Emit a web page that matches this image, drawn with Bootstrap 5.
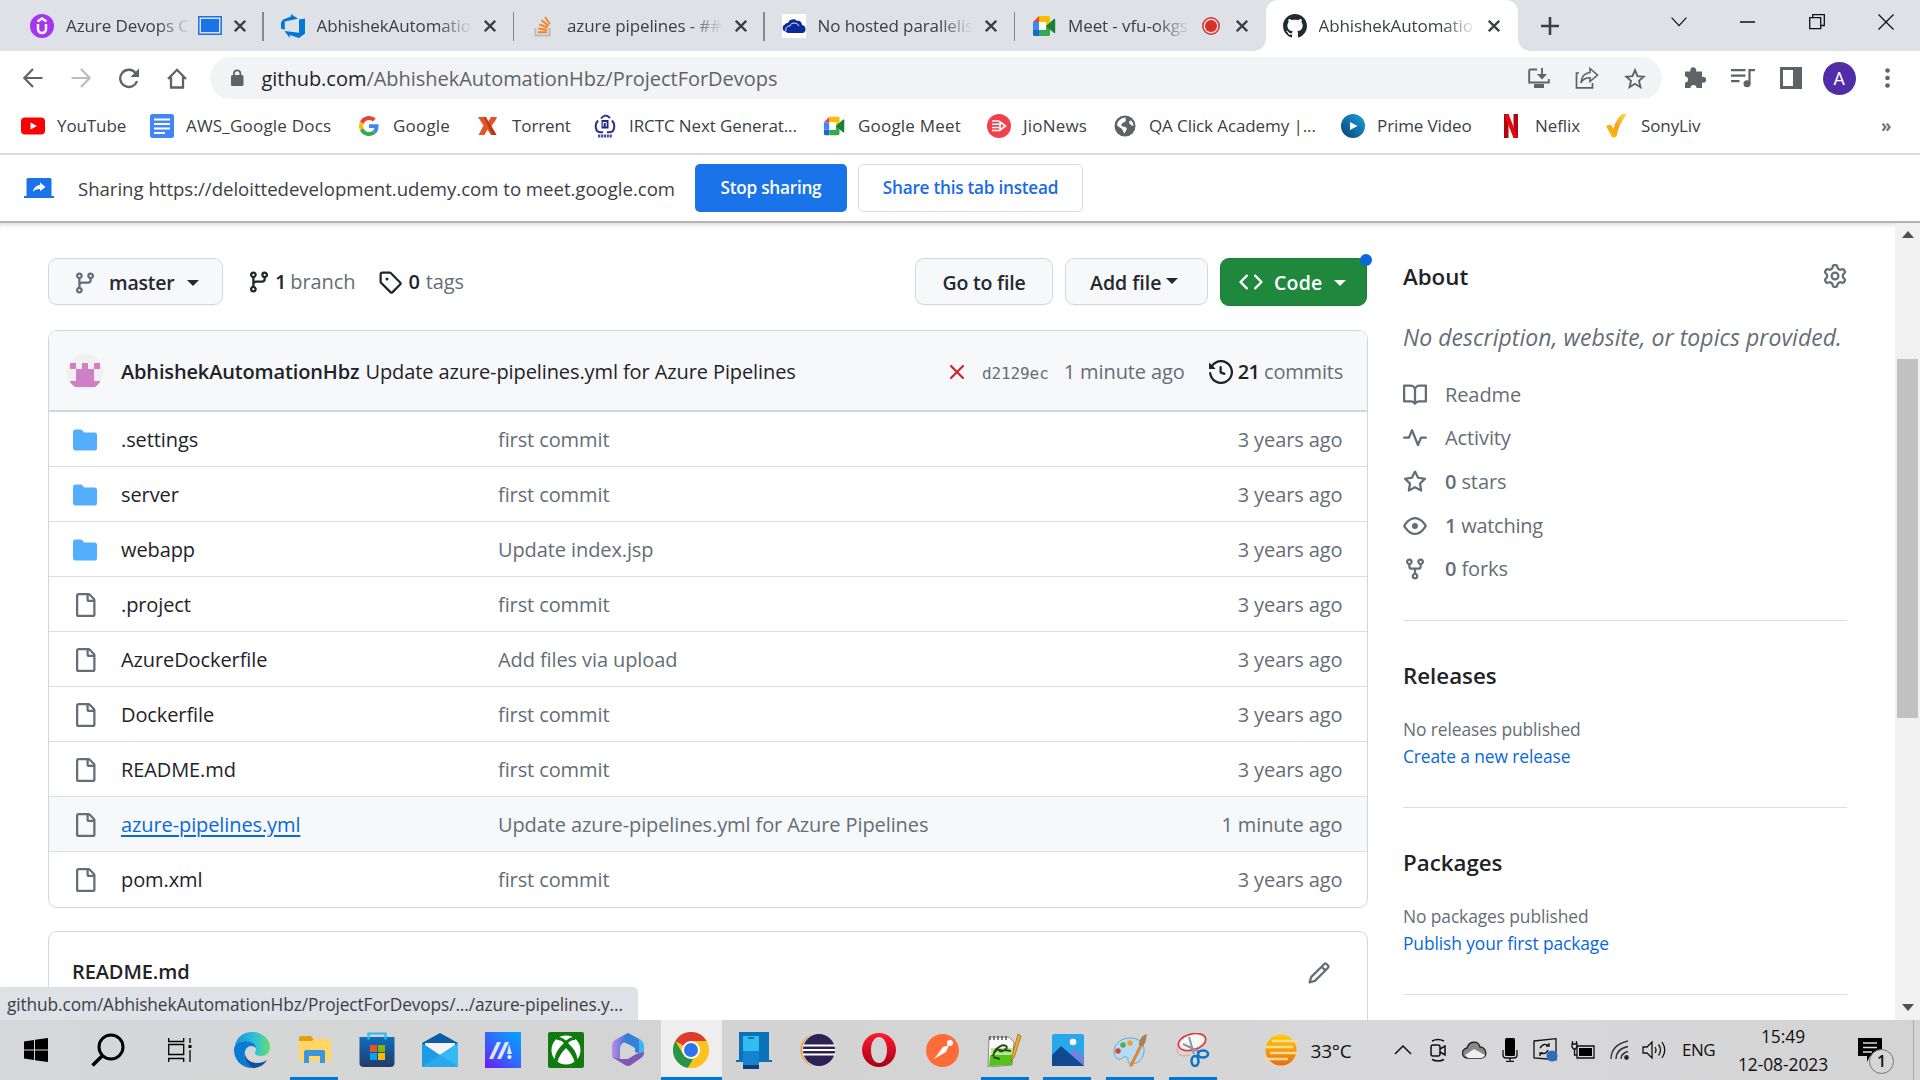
<!DOCTYPE html>
<html lang="en">
<head>
<meta charset="utf-8">
<title>AbhishekAutomationHbz/ProjectForDevops</title>
<link href="https://cdn.jsdelivr.net/npm/bootstrap@5.3.0/dist/css/bootstrap.min.css" rel="stylesheet">
<style>
:root{--ink:#1f2328;--dim:#656d76;--line:#d0d7de;--chrome:#dee1e6;--ui:#3c4043;--accent:#0969da}
body{width:1920px;height:1080px;overflow:hidden;font-family:"Open Sans","Noto Sans",sans-serif;font-size:20px;letter-spacing:-.1px;color:var(--ink);background:#fff;line-height:1.4}
svg{display:block;flex:none}
.oct{width:24px;height:24px;fill:currentColor}
/* browser tabs */
.tabstrip{height:51px;background:var(--chrome);padding-left:13px;font-size:17px;color:var(--ui)}
.tab{width:250.5px;height:51px;padding:0 18px 0 17px;gap:12px;position:relative}
.tab.sep::after{content:"";position:absolute;right:0;top:12px;height:29px;width:1.5px;background:#85888c}
.tab-title{flex:1;min-width:0;overflow:hidden;white-space:nowrap;-webkit-mask-image:linear-gradient(90deg,#000 calc(100% - 34px),transparent)}
.tab.front{background:#fff;border-radius:12px 12px 0 0;width:252px}
.tab.front::before,.tab.front::after{content:"";position:absolute;bottom:0;width:12px;height:12px}
.tab.front::before{left:-12px;background:radial-gradient(circle at 0 0,transparent 11.5px,#fff 12px)}
.tab.front::after{right:-12px;background:radial-gradient(circle at 100% 0,transparent 11.5px,#fff 12px)}
.winbtn{width:69px;height:44px}
/* toolbar */
.toolbar{height:54px;padding-left:9px;color:#5f6368}
.cell48{width:48px;height:48px;display:flex;align-items:center;justify-content:center;flex:none}
.omnibox{width:1452px;height:42px;border-radius:21px;background:#f1f3f4;margin-left:9px;padding:0 3px 0 17px}
.url{margin-left:14.5px;letter-spacing:-.03px;padding-top:1px}
.avatar-a{width:33px;height:33px;background:#512da8;font:18px Roboto,sans-serif}
.bookmarks{height:48px;display:grid;grid-template-columns:129px 207px 119px 117px 229px 165px 126px 228px 158px 106px 276px 28px;padding:0 0 6px 21px;font-size:17px;color:var(--ui);align-items:center;white-space:nowrap}
.bookmarks>div{display:flex;align-items:center;gap:12px}
.bm-wide{letter-spacing:.2px}
.sharebar{height:68px;border-top:2px solid #dadce0;padding-left:24px;font-size:18.6px;letter-spacing:-.02px;color:var(--ui)}
.share-text{width:617px;margin-left:24px;padding-top:2px}
.sharebar .btn{height:48px;font-size:17.2px;font-weight:600;border-radius:5px;letter-spacing:-.25px;padding:0}
.stopbtn{width:152px;background:#1a73e8;color:#fff}
.tabbtn{width:225px;margin-left:11px;border:1.5px solid #dadce0;color:#1a6ae8}
/* page */
.page{height:799px;border-top:2px solid #b4b4b4;box-shadow:inset 0 5px 5px -3px #ddd;overflow:hidden}
.maincol{width:1320px;margin-left:48px;padding-top:35px;flex:none}
.sidecol{width:444px;margin-left:35px;flex:none;color:var(--dim)}
.ghbtn{height:47px;border:1.5px solid #d5d8da;border-radius:9px;background:#f6f8fa;font-weight:600;font-size:19.5px;padding:2px 0 0;display:flex;align-items:center;box-shadow:0 1px 1px #1f23280a;position:relative;color:#24292f;letter-spacing:-.2px}
.caret-d{width:0;height:0;border:6px solid transparent;border-top-color:currentColor;border-bottom:0}
.codebtn{height:48px;background:#1f883d;border-color:#1b7d37;color:#fff}
.codebtn .dot{position:absolute;right:-6px;top:-5px;width:12px;height:12px;border-radius:50%;background:#0969da}
.files{border:1.5px solid var(--line);border-radius:9px;margin-top:24px;height:578px;overflow:hidden}
.filehead{height:81px;background:#f6f8fa;border-bottom:2px solid var(--line);padding:2px 24px 0 18px;white-space:nowrap}
.filerow{height:55px;border-top:1.5px solid #d8dee4;padding:1px 24.5px 0 24px;display:grid;grid-template-columns:48px 377px 1fr auto;align-items:center;color:var(--dim)}
.filerow:nth-child(2){border-top:0;height:54px;padding-top:2px}
.filerow.hot{background:#f6f8fa}
.fname{color:var(--ink)}
.hot .fname{color:#0969da;text-decoration:underline;text-underline-offset:3px;text-decoration-thickness:2px}
.readme{border:1.5px solid var(--line);border-radius:9px 9px 0 0;margin-top:23px;height:120px;padding:26px 36px 0 23px}
.sidecol h2{font-size:22.3px;font-weight:600;color:var(--ink);margin:0;line-height:30px;letter-spacing:0}
.sidecol .tiny{font-size:17.4px;line-height:27px}
.sidecol a{color:#0969da;text-decoration:none}
.blk{border-top:1.5px solid #d8dee4;height:187.2px;padding-top:40px}
.meta{height:43.6px;gap:18px}
.scroller{width:25px;margin-left:auto;background:#f1f1f1;display:flex;flex-direction:column;align-items:center;padding:8px 0 9px}
.thumb{width:21px;height:359px;background:#c1c1c1;margin-top:121px}
.bubble{position:absolute;left:0;top:987px;width:638px;height:33px;background:var(--chrome);border-radius:0 5px 0 0;padding:4px 0 0 7px;font-size:17.3px;color:var(--ui);white-space:nowrap;line-height:28px}
/* taskbar */
.taskbar{height:60px;background:linear-gradient(90deg,#d6d7d8,#d3d3d3 40%,#d8d7d9 75%,#d4d4d5);color:#111}
.tk72{width:72px;height:60px;display:flex;align-items:center;justify-content:center;flex:none}
.tk{width:62.75px;height:60px;display:flex;align-items:center;justify-content:center;position:relative;flex:none}
.tk.run::after{content:"";position:absolute;bottom:0;left:7px;width:48px;height:3px;background:#0078d7}
.tk.cur{background:linear-gradient(#eee,#eee) 1px 0/61px 60px no-repeat}
.tk.cur::after{left:1px;width:61px}
.tray{display:grid;grid-template-columns:35px 36px 36px 35px 38px 36px 37px 31px;justify-items:center;align-items:center}
.clock{width:120px;margin-left:-2px;text-align:center;font-size:17.4px;line-height:28px;letter-spacing:-.05px}
.nbadge{position:absolute;left:11px;top:29px;width:25px;height:25px;border:1.5px solid #777;border-radius:50%;background:#d6d6d6;font-size:16px;font-weight:600;line-height:22px;text-align:center}
</style>
<script src="https://cdn.jsdelivr.net/npm/bootstrap@5.3.0/dist/js/bootstrap.bundle.min.js"></script>
</head>
<body>
<svg width="0" height="0" class="position-absolute">
<defs>
<linearGradient id="gEdge" x1="0" y1="0" x2="1" y2="0"><stop offset="0" stop-color="#1496d8"/><stop offset=".6" stop-color="#30c2d5"/><stop offset="1" stop-color="#66e066"/></linearGradient>
<linearGradient id="gBlue" x1="0" y1="0" x2="0" y2="1"><stop offset="0" stop-color="#0a6fc0"/><stop offset="1" stop-color="#253a66"/></linearGradient>
<linearGradient id="gAsus" x1="0" y1="1" x2="1" y2="0"><stop offset="0" stop-color="#6a1bf5"/><stop offset=".5" stop-color="#2f6bff"/><stop offset="1" stop-color="#00a8ff"/></linearGradient>
<linearGradient id="gOp" x1="0" y1="0" x2="0" y2="1"><stop offset="0" stop-color="#ff1b2d"/><stop offset="1" stop-color="#a70014"/></linearGradient>
<linearGradient id="gPrime" x1="1" y1="0" x2="0" y2="1"><stop offset="0" stop-color="#19a6dc"/><stop offset="1" stop-color="#0b3d78"/></linearGradient>
<linearGradient id="gSun" x1="0" y1="0" x2="0" y2="1"><stop offset="0" stop-color="#ffd000"/><stop offset="1" stop-color="#ee6a0b"/></linearGradient>
<linearGradient id="gSony" x1="0" y1="1" x2="1" y2="0"><stop offset="0" stop-color="#ffc400"/><stop offset=".5" stop-color="#f5a11c"/><stop offset="1" stop-color="#ffdc4d"/></linearGradient>
<linearGradient id="g365" x1="0" y1="0" x2="1" y2="0"><stop offset="0" stop-color="#c08be8"/><stop offset="1" stop-color="#2b6fd6"/></linearGradient>
<symbol id="close" viewBox="0 0 12 12"><path d="M.8.8 11.200 11.200M11.200.8.8 11.200" stroke="#3c4043" stroke-width="2.300"/></symbol>
<symbol id="branch" viewBox="0 0 16 16"><path d="M9.5 3.25a2.25 2.25 0 1 1 3 2.122V6A2.5 2.5 0 0 1 10 8.5H6a1 1 0 0 0-1 1v1.128a2.251 2.251 0 1 1-1.5 0V5.372a2.25 2.25 0 1 1 1.5 0v1.836A2.493 2.493 0 0 1 6 7h4a1 1 0 0 0 1-1v-.628A2.25 2.25 0 0 1 9.5 3.25Zm-6 0a.75.75 0 1 0 1.5 0 .75.75 0 0 0-1.5 0Zm8.25-.75a.75.75 0 1 0 0 1.5.75.75 0 0 0 0-1.5ZM4.25 12a.75.75 0 1 0 0 1.5.75.75 0 0 0 0-1.5Z"/></symbol>
<symbol id="folder" viewBox="0 0 16 16"><path d="M1.75 1A1.75 1.75 0 0 0 0 2.75v10.5C0 14.216.784 15 1.75 15h12.5A1.75 1.75 0 0 0 16 13.250v-8.500A1.75 1.75 0 0 0 14.250 3H7.500a.25.25 0 0 1-.2-.1l-.9-1.200C6.070 1.260 5.550 1 5 1H1.750Z"/></symbol>
<symbol id="file" viewBox="0 0 16 16"><path d="M2 1.75C2 .784 2.784 0 3.75 0h6.586c.464 0 .909.184 1.237.513l2.914 2.914c.329.328.513.773.513 1.237v9.586A1.75 1.75 0 0 1 13.25 16h-9.5A1.75 1.75 0 0 1 2 14.25Zm1.75-.25a.25.25 0 0 0-.25.25v12.5c0 .138.112.25.25.25h9.5a.25.25 0 0 0 .25-.25V6h-2.75A1.75 1.75 0 0 1 9 4.25V1.5Zm6.75.062V4.25c0 .138.112.25.25.25h2.688l-.011-.013-2.914-2.914-.013-.011Z"/></symbol>
<symbol id="meet" viewBox="0 0 24 24"><path d="M1 8 7 2v6Z" fill="#ea4335"/><path d="M7 2h9.500a1.500 1.500 0 0 1 1.500 1.500V8H7Z" fill="#fbbc04"/><path d="M1 8h6v8H1Z" fill="#4285f4"/><path d="M1 16h6v6H2.500A1.500 1.500 0 0 1 1 20.500Z" fill="#1967d2"/><path d="M7 16h7v-4l4-4v12.500a1.500 1.500 0 0 1-1.500 1.500H7Z" fill="#34a853"/><path d="M14 8h4v4h-4Z" fill="#fbbc04"/><path d="m14 12 8-7c.6-.4 1.200 0 1.200.6v12.800c0 .6-.6 1-1.200.6Z" fill="#188038"/><path d="M7 8h7v8H7Z" fill="#fff"/></symbol>
</defs>
</svg>

<header>
<div class="tabstrip d-flex">
  <div class="tab sep d-flex align-items-center"><svg width="24" height="24" viewBox="0 0 24 24"><circle cx="12" cy="12" r="12" fill="#a435f0"/><path d="M7.500 7.500 12 4.500l4.500 3M8 10v5a4 4 0 0 0 8 0v-5" fill="none" stroke="#fff" stroke-width="2.500"/></svg><span class="tab-title" style="margin-right:-5px">Azure Devops C</span><svg width="24" height="19" viewBox="0 0 24 19"><path d="M.8.8h22.400v17.400H.8Z" fill="none" stroke="#1a73e8" stroke-width="1.500"/><path d="M3 3h18v13H3Z" fill="#1a73e8"/></svg><svg width="12" height="12"><use href="#close"/></svg></div>
  <div class="tab sep d-flex align-items-center"><svg width="24" height="24" viewBox="0 0 24 24"><path d="M0 8.500 2.200 5.600 10 2.400V0l7 4.700-13.200 2.700v8.300L0 14.500ZM24 4.400v15l-6 4.600-9.300-3v3L3.500 17.100l14.500 1.700V5.600Z" fill="#0078d7"/></svg><span class="tab-title">AbhishekAutomatio</span><svg width="12" height="12"><use href="#close"/></svg></div>
  <div class="tab sep d-flex align-items-center"><svg width="24" height="24" viewBox="0 0 24 24"><path d="M4.500 14v7.500h14V14" fill="none" stroke="#bcbbbb" stroke-width="2"/><path d="M7 18.300h9M7.200 14.500l9 1.500M8.300 10.300l8.300 3.400M10.600 6.300l7 5.600M14 3l5 7.200" stroke="#f48024" stroke-width="1.900"/></svg><span class="tab-title">azure pipelines - ##</span><svg width="12" height="12"><use href="#close"/></svg></div>
  <div class="tab sep d-flex align-items-center"><svg width="24" height="24" viewBox="0 0 24 24"><path d="M0 0h24v24H0Z" fill="#fff"/><path d="M2 17a4 4 0 0 1 0-6c1 0 1-2 4-2 1-4 7-5 9-2 3-1 5 2 5 4 4 0 5 7 1 8H7c-3 0-3-2-5-2Z" fill="#0b2a9a"/><path d="M4 17c-1-4 2-5 4-5 1-4 7-4 9 0" fill="none" stroke="#fff" stroke-width="1"/></svg><span class="tab-title">No hosted parallelis</span><svg width="12" height="12"><use href="#close"/></svg></div>
  <div class="tab d-flex align-items-center"><svg width="24" height="24"><use href="#meet"/></svg><span class="tab-title">Meet - vfu-okgs</span><svg width="18" height="18" viewBox="0 0 18 18"><circle cx="9" cy="9" r="8.200" fill="none" stroke="#d93025" stroke-width="1.500"/><circle cx="9" cy="9" r="6" fill="#d93025"/></svg><svg width="12" height="12" class="ms-1"><use href="#close"/></svg></div>
  <div class="tab front d-flex align-items-center"><svg width="24" height="24" viewBox="0 0 16 16"><path fill="#24292f" d="M8 0c4.42 0 8 3.58 8 8a8.013 8.013 0 0 1-5.45 7.59c-.4.08-.55-.17-.55-.38 0-.27.01-1.13.01-2.2 0-.75-.25-1.23-.54-1.48 1.78-.2 3.65-.88 3.65-3.95 0-.88-.31-1.59-.82-2.15.08-.2.36-1.02-.08-2.12 0 0-.67-.22-2.2.82-.64-.18-1.32-.27-2-.27-.68 0-1.36.09-2 .27-1.53-1.03-2.2-.82-2.2-.82-.44 1.1-.16 1.92-.08 2.12-.51.56-.82 1.28-.82 2.15 0 3.06 1.86 3.75 3.64 3.95-.23.2-.44.55-.51 1.07-.46.21-1.61.55-2.33-.66-.15-.24-.6-.83-1.23-.82-.67.01-.27.38.01.53.34.19.73.9.82 1.13.16.45.68 1.31 2.69.94 0 .67.01 1.3.01 1.49 0 .21-.15.45-.55.38A7.995 7.995 0 0 1 0 8c0-4.42 3.58-8 8-8Z"/></svg><span class="tab-title">AbhishekAutomatio</span><svg width="12" height="12"><use href="#close"/></svg></div>
  <div class="cell48 align-self-center" style="margin-left:8px;margin-right:auto"><svg width="18" height="18" viewBox="0 0 18 18"><path d="M9 0v18M0 9h18" stroke="#3c4043" stroke-width="2.600"/></svg></div>
  <div class="winbtn d-flex align-items-center justify-content-center"><svg width="16" height="10" viewBox="0 0 16 10"><path d="m.6.6 7.400 8 7.400-8" fill="none" stroke="#111" stroke-width="1.200"/></svg></div>
  <div class="winbtn d-flex align-items-center justify-content-center"><svg width="15" height="2"><path d="M0 1h15" stroke="#111" stroke-width="1.500"/></svg></div>
  <div class="winbtn d-flex align-items-center justify-content-center"><svg width="16" height="16" viewBox="0 0 16 16"><path d="M.7 3.700h11v11H.7ZM3.700 3.500V.7h11.600v10.800h-3" fill="none" stroke="#111" stroke-width="1.300"/></svg></div>
  <div class="winbtn d-flex align-items-center justify-content-center"><svg width="16" height="16" viewBox="0 0 16 16"><path d="m.5.5 15 15m0-15-15 15" stroke="#111" stroke-width="1.300"/></svg></div>
</div>
<div class="toolbar d-flex align-items-center">
  <div class="cell48"><svg width="20" height="20" viewBox="0 0 20 20"><path d="M19.500 10H1.500M10 1 1.300 10l8.700 9" fill="none" stroke="#5f6368" stroke-width="2.200"/></svg></div>
  <div class="cell48"><svg width="20" height="20" viewBox="0 0 20 20"><path d="M.5 10h18M10 1l8.700 9-8.700 9" fill="none" stroke="#babcbe" stroke-width="2.200"/></svg></div>
  <div class="cell48"><svg width="22" height="21" viewBox="0 0 22 21"><path d="M17.700 5.200A8.600 8.600 0 1 0 19 13" fill="none" stroke="#5f6368" stroke-width="2.300"/><path d="M21 .5V9h-8.500Z" fill="#5f6368"/></svg></div>
  <div class="cell48"><svg width="20" height="21" viewBox="0 0 20 21"><path d="M1 11 10 1.800l9 9.200M4 9v10.500h12V9" fill="none" stroke="#5f6368" stroke-width="2.300"/></svg></div>
  <div class="omnibox d-flex align-items-center">
    <svg width="20" height="18" viewBox="0 0 20 18"><rect x="4" y="6" width="12.500" height="11" rx="1.500" fill="#5f6368"/><path d="M7 7V4.500a3.200 3.200 0 0 1 6.400 0V7" fill="none" stroke="#5f6368" stroke-width="1.800"/></svg>
    <span class="me-auto url"><span class="text-dark">github.com</span>/AbhishekAutomationHbz/ProjectForDevops</span>
    <div class="cell48"><svg width="22" height="21" viewBox="0 0 22 21"><path d="M9 1.500H2.500A1.300 1.300 0 0 0 1.200 3v11.500h19.600V11M14 0v9" fill="none" stroke="#5f6368" stroke-width="1.900"/><path d="m9 6 5 5.500L19 6M6 16h10v4H6Z" fill="#5f6368"/></svg></div>
    <div class="cell48"><svg width="24" height="22" viewBox="0 0 24 22"><path d="M4 6H1.500v14.800h16V16" fill="none" stroke="#5f6368" stroke-width="1.700"/><path d="M15 1.500 22.500 8 15 14.500v-3.700c-5 0-7.500 1.800-9 5 .4-5.500 3.500-9.700 9-10.300Z" fill="none" stroke="#5f6368" stroke-width="1.600"/></svg></div>
    <div class="cell48"><svg width="22" height="21" viewBox="0 0 22 21"><path d="m11 2.200 2.500 6 6.300.5-4.800 4.200 1.500 6.300L11 15.800l-5.500 3.400L7 12.900 2.200 8.700l6.300-.5Z" fill="none" stroke="#5f6368" stroke-width="1.900"/></svg></div>
  </div>
  <div class="cell48" style="margin-left:9px"><svg width="22" height="22" viewBox="0 0 22 22"><path d="M1 4.500h5.500a3 3 0 1 1 5.500 0h6V10a3 3 0 1 1 0 5.500V21h-5.500a3 3 0 0 0-6 0H1v-5.500a3 3 0 0 0 0-6Z" fill="#5f6368"/></svg></div>
  <div class="cell48"><svg width="24" height="20" viewBox="0 0 24 20"><path d="M0 2.200h14.500M0 7.700h14.500M0 13.200h8.500M18.500 16V2.200H24" fill="none" stroke="#5f6368" stroke-width="2.200"/><circle cx="16" cy="15.800" r="3.500" fill="#5f6368"/></svg></div>
  <div class="cell48"><svg width="22" height="22" viewBox="0 0 22 22"><path d="M0 0h22v22H0ZM3 3v16h10V3Z" fill="#5f6368" fill-rule="evenodd"/></svg></div>
  <div class="cell48"><div class="avatar-a rounded-circle text-white d-flex align-items-center justify-content-center">A</div></div>
  <div class="cell48"><svg width="5" height="20" viewBox="0 0 5 20" fill="#5f6368"><circle cx="2.500" cy="2.500" r="2.300"/><circle cx="2.500" cy="10" r="2.300"/><circle cx="2.500" cy="17.500" r="2.300"/></svg></div>
</div>
<nav class="bookmarks">
  <div><svg width="24" height="24" viewBox="0 0 24 24"><rect y="3.500" width="24" height="17" rx="4" fill="#f00"/><path d="m9.500 8.500 6.500 3.500-6.500 3.500Z" fill="#fff"/></svg>YouTube</div>
  <div class="bm-wide"><svg width="24" height="24" viewBox="0 0 24 24"><rect width="24" height="24" rx="2.500" fill="#4285f4"/><path d="M4 5.500h16M4 10h16M4 14.500h16M4 19h11" stroke="#fff" stroke-width="2.200"/></svg>AWS_Google Docs</div>
  <div class="bm-wide"><svg width="24" height="20" viewBox="0 0 48 48"><path fill="#EA4335" d="M24 9.500c3.540 0 6.710 1.220 9.210 3.600l6.850-6.850C35.900 2.380 30.470 0 24 0 14.620 0 6.510 5.380 2.560 13.220l7.980 6.190C12.430 13.720 17.740 9.500 24 9.500z"/><path fill="#4285F4" d="M46.980 24.550c0-1.570-.15-3.090-.38-4.550H24v9.020h12.940c-.58 2.960-2.260 5.480-4.780 7.180l7.730 6c4.510-4.180 7.090-10.360 7.090-17.650z"/><path fill="#FBBC05" d="M10.530 28.590c-.48-1.450-.76-2.990-.76-4.590s.27-3.140.76-4.590l-7.980-6.190C.92 16.460 0 20.120 0 24c0 3.880.92 7.540 2.560 10.780l7.970-6.190z"/><path fill="#34A853" d="M24 48c6.480 0 11.930-2.130 15.890-5.810l-7.730-6c-2.150 1.450-4.920 2.300-8.160 2.300-6.260 0-11.570-4.220-13.470-9.910l-7.980 6.190C6.510 42.620 14.620 48 24 48z"/></svg>Google</div>
  <div><svg width="24" height="20" viewBox="0 0 24 20"><path d="M2 1h7l3 5 3-5h6l-1.500 3.500L15.500 10l5 9H15l-3.500-5.500L8.500 19H2.500l5-9.500Z" fill="#e2552b"/><path d="M8 1h2l5 9 5.500 9H16Z" fill="#b83a14"/></svg>Torrent</div>
  <div><svg width="24" height="24" viewBox="0 0 24 24"><path d="M8 4.500Q12-1 17 4M5 6.500Q1 11 4 17q3 2 6 1M19 6.500q4 4.500 1 10.500-3 2-6 1" fill="none" stroke="#2b2f92" stroke-width="2"/><path d="M8.500 6h7v8.500h-7Z" fill="#23277f"/><path d="M10.200 8v4.500m0-4h3v4" fill="none" stroke="#fff"/><path d="M5 22h14" stroke="#4a4da3" stroke-width="3.200" stroke-dasharray="2.200 .7"/></svg>IRCTC Next Generat...</div>
  <div class="bm-wide"><svg width="24" height="22"><use href="#meet"/></svg>Google Meet</div>
  <div class="bm-wide"><svg width="24" height="24" viewBox="0 0 24 24"><circle cx="12" cy="12" r="12" fill="#f1414c"/><path d="M5 7h7M5 10.200h7M5 13.400h7M5 16.600h7" stroke="#fff" stroke-width="1.500"/><path d="m13 8 5.500 4-5.500 4Z" fill="none" stroke="#fff" stroke-width="1.700"/></svg>JioNews</div>
  <div><svg width="24" height="22" viewBox="0 0 22 22"><circle cx="11" cy="11" r="10.500" fill="#5f6368"/><path d="M12 2.500c-1 2.500 1 3-1.500 4.500S7 8.500 7.500 10.500s4 .5 5 2.500-1 2-1.500 5.500c-2-1-2-3-3-4.500s-4-2-5-4c.5-4 4.500-7.500 9-7.500Zm5 3c-2 0-2.500 2.500-1 3.500s1 2 3.500 1.500c0-2-1-3.500-2.500-5Z" fill="#fff"/></svg>QA Click Academy |...</div>
  <div><svg width="24" height="24" viewBox="0 0 24 24"><circle cx="12" cy="12" r="12" fill="url(#gPrime)"/><path d="m9 8 7.500 4L9 16Z" fill="#fff"/></svg>Prime Video</div>
  <div><svg width="24" height="24" viewBox="0 0 24 24"><path d="M5 0h4.500v24H5ZM14.500 0H19v24h-4.500Z" fill="#b1060f"/><path d="M5 0h4.500L19 24h-4.500Z" fill="#e50914"/></svg>Neflix</div>
  <div><svg width="24" height="24" viewBox="0 0 24 24"><path d="m1 12 4.500-1.500L8.500 15C10 9 13 3 17 0h5c-4 5-9 13-10 21-.2 2-3.500 3.500-5 2Z" fill="url(#gSony)"/></svg>SonyLiv</div>
  <div class="fw-bold text-secondary">»</div>
</nav>
<div class="sharebar d-flex align-items-center">
  <svg width="30" height="20" viewBox="0 0 30 20"><path d="M4 0h22a1.500 1.500 0 0 1 1.500 1.500V18H30v2H0v-2h2.500V1.500A1.500 1.500 0 0 1 4 0Z" fill="#1a73e8"/><path d="M16 4.500 21.500 9 16 13.200V11c-3.500 0-5.500.8-7 3 .5-4 3-6.500 7-7Z" fill="#fff"/></svg>
  <span class="share-text text-nowrap">Sharing https://deloittedevelopment.udemy.com to meet.google.com</span>
  <button class="btn stopbtn">Stop sharing</button><button class="btn tabbtn">Share this tab instead</button>
</div>
</header>

<main class="page d-flex">
  <section class="maincol">
    <div class="d-flex align-items-start">
      <button class="btn ghbtn" style="width:175px;padding-left:24px"><svg class="oct" style="color:#656d76"><use href="#branch"/></svg><span style="margin:0 12px 0 12px">master</span><i class="caret-d"></i></button>
      <div class="d-flex align-items-center" style="height:48px;margin-left:24px;color:var(--dim)"><svg class="oct text-dark"><use href="#branch"/></svg><b class="fw-semibold text-dark ms-1 me-1">1</b>branch
      <svg class="oct text-dark" style="margin-left:23px" viewBox="0 0 16 16"><path d="M1 7.775V2.75C1 1.784 1.784 1 2.75 1h5.025c.464 0 .91.184 1.238.513l6.25 6.25a1.75 1.75 0 0 1 0 2.474l-5.026 5.026a1.75 1.75 0 0 1-2.474 0l-6.25-6.25A1.752 1.752 0 0 1 1 7.775Zm1.5 0c0 .066.026.13.073.177l6.25 6.25a.25.25 0 0 0 .354 0l5.025-5.025a.25.25 0 0 0 0-.354l-6.25-6.25a.25.25 0 0 0-.177-.073H2.75a.25.25 0 0 0-.25.25ZM6 5a1 1 0 1 1 0 2 1 1 0 0 1 0-2Z"/></svg><b class="fw-semibold text-dark" style="margin:0 6px">0</b>tags</div>
      <button class="btn ghbtn justify-content-center ms-auto" style="width:138px">Go to file</button>
      <button class="btn ghbtn" style="width:143px;margin-left:12px;padding-left:24px;letter-spacing:0">Add file<i class="caret-d" style="margin-left:5px;margin-bottom:4px"></i></button>
      <button class="btn ghbtn codebtn" style="width:147px;margin-left:12px;margin-right:1px;padding-left:18px"><svg class="oct" style="margin-bottom:3px" viewBox="0 0 16 16"><path d="m11.28 3.22 4.25 4.25a.75.75 0 0 1 0 1.06l-4.25 4.25a.749.749 0 0 1-1.275-.326.749.749 0 0 1 .215-.734L13.94 8l-3.72-3.72a.749.749 0 0 1 .326-1.275.749.749 0 0 1 .734.215Zm-6.56 0a.751.751 0 0 1 1.042.018.751.751 0 0 1 .018 1.042L2.06 8l3.72 3.72a.749.749 0 0 1-.326 1.275.749.749 0 0 1-.734-.215L.47 8.53a.75.75 0 0 1 0-1.06Z"/></svg><span style="margin:0 12px 0 11px;letter-spacing:.2px">Code</span><i class="caret-d"></i><i class="dot"></i></button>
    </div>
    <div class="files">
      <div class="filehead d-flex align-items-center">
        <svg width="36" height="36" viewBox="0 0 36 36" style="margin-right:18px"><clipPath id="av"><circle cx="18" cy="18" r="18"/></clipPath><g clip-path="url(#av)"><path d="M0 0h36v36H0Z" fill="#f0f0f0"/><path d="M3 9h6v6H3Zm12 0h6v6h6V9h6v6h-6v12h6v6H3v-6h6V15h6Z" fill="#d07fc6"/></g></svg>
        <b class="fw-semibold" style="letter-spacing:-.15px">AbhishekAutomationHbz</b><span style="margin-left:6px">Update azure-pipelines.yml for Azure Pipelines</span>
        <svg width="14" height="14" class="ms-auto" viewBox="0 0 14 14"><path d="m1 1 12 12M13 1 1 13" stroke="#d1242f" stroke-width="2.200" stroke-linecap="round"/></svg>
        <span style="font:16px 'DejaVu Sans Mono',monospace;color:var(--dim);margin:3px 15px 0 18px">d2129ec</span>
        <span style="color:var(--dim);margin-right:24px">1 minute ago</span>
        <svg class="oct" viewBox="0 0 16 16"><path d="m.427 1.927 1.215 1.215a8.002 8.002 0 1 1-1.6 5.685.75.75 0 1 1 1.493-.154 6.5 6.5 0 1 0 1.18-4.458l1.358 1.358A.25.25 0 0 1 3.896 6H.25A.25.25 0 0 1 0 5.75V2.104a.25.25 0 0 1 .427-.177ZM7.75 4a.75.75 0 0 1 .75.75v2.992l2.028.812a.75.75 0 0 1-.557 1.392l-2.5-1A.751.751 0 0 1 7 8.25v-3.5A.75.75 0 0 1 7.75 4Z"/></svg>
        <b class="fw-semibold" style="margin:0 5px;letter-spacing:-.8px">21</b><span style="color:var(--dim);letter-spacing:-.2px">commits</span>
      </div>
      <div class="filerow"><svg class="oct" style="color:#54aeff"><use href="#folder"/></svg><span class="fname">.settings</span><span>first commit</span><span>3 years ago</span></div>
      <div class="filerow"><svg class="oct" style="color:#54aeff"><use href="#folder"/></svg><span class="fname">server</span><span>first commit</span><span>3 years ago</span></div>
      <div class="filerow"><svg class="oct" style="color:#54aeff"><use href="#folder"/></svg><span class="fname">webapp</span><span>Update index.jsp</span><span>3 years ago</span></div>
      <div class="filerow"><svg class="oct"><use href="#file"/></svg><span class="fname">.project</span><span>first commit</span><span>3 years ago</span></div>
      <div class="filerow"><svg class="oct"><use href="#file"/></svg><span class="fname">AzureDockerfile</span><span>Add files via upload</span><span>3 years ago</span></div>
      <div class="filerow"><svg class="oct"><use href="#file"/></svg><span class="fname">Dockerfile</span><span>first commit</span><span>3 years ago</span></div>
      <div class="filerow"><svg class="oct"><use href="#file"/></svg><span class="fname">README.md</span><span>first commit</span><span>3 years ago</span></div>
      <div class="filerow hot"><svg class="oct"><use href="#file"/></svg><span class="fname">azure-pipelines.yml</span><span>Update azure-pipelines.yml for Azure Pipelines</span><span>1 minute ago</span></div>
      <div class="filerow"><svg class="oct"><use href="#file"/></svg><span class="fname">pom.xml</span><span>first commit</span><span>3 years ago</span></div>
    </div>
    <div class="readme d-flex justify-content-between align-items-start"><b class="fw-semibold">README.md</b><svg class="oct" style="color:var(--dim);margin-top:3px" viewBox="0 0 16 16"><path d="M11.013 1.427a1.75 1.75 0 0 1 2.474 0l1.086 1.086a1.75 1.75 0 0 1 0 2.474l-8.61 8.61c-.21.21-.47.364-.756.445l-3.251.93a.75.75 0 0 1-.927-.928l.929-3.25c.081-.286.235-.547.445-.758l8.61-8.61Zm.176 4.823L9.75 4.81l-6.286 6.287a.253.253 0 0 0-.064.108l-.558 1.953 1.953-.558a.253.253 0 0 0 .108-.064Zm1.238-3.763a.25.25 0 0 0-.354 0L10.811 3.75l1.439 1.44 1.263-1.263a.25.25 0 0 0 0-.354Z"/></svg></div>
  </section>
  <aside class="sidecol">
    <div class="d-flex justify-content-between" style="padding-top:39px"><h2>About</h2><svg class="oct" style="margin-top:2px" viewBox="0 0 16 16"><path d="M8 0a8.2 8.2 0 0 1 .701.031C9.444.095 9.99.645 10.16 1.29l.288 1.107c.018.066.079.158.212.224.231.114.454.243.668.386.123.082.233.09.299.071l1.103-.303c.644-.176 1.392.021 1.82.63.27.385.506.792.704 1.218.315.675.111 1.422-.364 1.891l-.814.806c-.049.048-.098.147-.088.294.016.257.016.515 0 .772-.01.147.038.246.088.294l.814.806c.475.469.679 1.216.364 1.891a7.977 7.977 0 0 1-.704 1.217c-.428.61-1.176.807-1.82.63l-1.102-.302c-.067-.019-.177-.011-.3.071a5.909 5.909 0 0 1-.668.386c-.133.066-.194.158-.211.224l-.29 1.106c-.168.646-.715 1.196-1.458 1.26a8.006 8.006 0 0 1-1.402 0c-.743-.064-1.289-.614-1.458-1.26l-.289-1.106c-.018-.066-.079-.158-.212-.224a5.738 5.738 0 0 1-.668-.386c-.123-.082-.233-.09-.299-.071l-1.103.303c-.644.176-1.392-.021-1.82-.63a8.12 8.12 0 0 1-.704-1.218c-.315-.675-.111-1.422.363-1.891l.815-.806c.05-.048.098-.147.088-.294a6.214 6.214 0 0 1 0-.772c.01-.147-.038-.246-.088-.294l-.815-.806C.635 6.045.431 5.298.746 4.623a7.92 7.92 0 0 1 .704-1.217c.428-.61 1.176-.807 1.82-.63l1.102.302c.067.019.177.011.3-.071.214-.143.437-.272.668-.386.133-.066.194-.158.211-.224l.29-1.106C6.009.645 6.556.095 7.299.03 7.53.01 7.764 0 8 0Zm-.571 1.525c-.036.003-.108.036-.137.146l-.289 1.105c-.147.561-.549.967-.998 1.189-.173.086-.34.183-.5.29-.417.278-.97.423-1.529.27l-1.103-.303c-.109-.03-.175.016-.195.045-.22.312-.412.644-.573.99-.014.031-.021.11.059.19l.815.806c.411.406.562.957.53 1.456a4.709 4.709 0 0 0 0 .582c.032.499-.119 1.05-.53 1.456l-.815.806c-.081.08-.073.159-.059.19.162.346.353.677.573.989.02.03.085.076.195.046l1.102-.303c.56-.153 1.113-.008 1.53.27.161.107.328.204.501.29.447.222.85.629.997 1.189l.289 1.105c.029.109.101.143.137.146a6.6 6.6 0 0 0 1.142 0c.036-.003.108-.036.137-.146l.289-1.105c.147-.561.549-.967.998-1.189.173-.086.34-.183.5-.29.417-.278.97-.423 1.529-.27l1.103.303c.109.029.175-.016.195-.045.22-.313.411-.644.573-.99.014-.031.021-.11-.059-.19l-.815-.806c-.411-.406-.562-.957-.53-1.456a4.709 4.709 0 0 0 0-.582c-.032-.499.119-1.05.53-1.456l.815-.806c.081-.08.073-.159.059-.19a6.464 6.464 0 0 0-.573-.989c-.02-.03-.085-.076-.195-.046l-1.102.303c-.56.153-1.113.008-1.53-.27a4.44 4.44 0 0 0-.501-.29c-.447-.222-.85-.629-.997-1.189l-.289-1.105c-.029-.11-.101-.143-.137-.146a6.6 6.6 0 0 0-1.142 0ZM11 8a3 3 0 1 1-6 0 3 3 0 0 1 6 0ZM9.5 8a1.5 1.5 0 1 0-3.001.001A1.5 1.5 0 0 0 9.5 8Z"/></svg></div>
    <div class="fst-italic text-nowrap" style="font-size:23px;letter-spacing:.05px;line-height:36px;margin-top:27px">No description, website, or topics provided.</div>
    <div style="margin-top:18px;height:247px">
      <div class="meta d-flex align-items-center"><svg class="oct" viewBox="0 0 16 16"><path d="M0 1.75A.75.75 0 0 1 .75 1h4.253c1.227 0 2.317.59 3 1.501A3.743 3.743 0 0 1 11.006 1h4.245a.75.75 0 0 1 .75.75v10.5a.75.75 0 0 1-.75.75h-4.507a2.25 2.25 0 0 0-1.591.659l-.622.621a.75.75 0 0 1-1.06 0l-.622-.621A2.25 2.25 0 0 0 5.258 13H.75a.75.75 0 0 1-.75-.75Zm7.251 10.324.004-5.073-.002-2.253A2.25 2.25 0 0 0 5.003 2.5H1.5v9h3.757a3.75 3.75 0 0 1 1.994.574ZM8.755 4.75l-.004 7.322a3.752 3.752 0 0 1 1.992-.572H14.5v-9h-3.495a2.25 2.25 0 0 0-2.25 2.25Z"/></svg>Readme</div>
      <div class="meta d-flex align-items-center"><svg class="oct" viewBox="0 0 16 16"><path d="M6 2c.306 0 .582.187.696.471L10 10.731l1.304-3.26A.751.751 0 0 1 12 7h3.25a.75.75 0 0 1 0 1.5h-2.742l-1.812 4.528a.751.751 0 0 1-1.392 0L6 4.77 4.696 8.03A.75.75 0 0 1 4 8.5H.75a.75.75 0 0 1 0-1.5h2.742l1.812-4.529A.751.751 0 0 1 6 2Z"/></svg>Activity</div>
      <div class="meta d-flex align-items-center"><svg class="oct" viewBox="0 0 16 16"><path d="M8 .25a.75.75 0 0 1 .673.418l1.882 3.815 4.21.612a.75.75 0 0 1 .416 1.279l-3.046 2.97.719 4.192a.751.751 0 0 1-1.088.791L8 12.347l-3.766 1.98a.75.75 0 0 1-1.088-.79l.72-4.194L.818 6.374a.75.75 0 0 1 .416-1.28l4.21-.611L7.327.668A.75.75 0 0 1 8 .25Zm0 2.445L6.615 5.5a.75.75 0 0 1-.564.41l-3.097.45 2.24 2.184a.75.75 0 0 1 .216.664l-.528 3.084 2.769-1.456a.75.75 0 0 1 .698 0l2.77 1.456-.53-3.084a.75.75 0 0 1 .216-.664l2.24-2.183-3.096-.45a.75.75 0 0 1-.564-.41L8 2.694Z"/></svg><span><b class="fw-semibold">0</b> stars</span></div>
      <div class="meta d-flex align-items-center"><svg class="oct" viewBox="0 0 16 16"><path d="M8 2c1.981 0 3.671.992 4.933 2.078 1.27 1.091 2.187 2.345 2.637 3.023a1.62 1.62 0 0 1 0 1.798c-.45.678-1.367 1.932-2.637 3.023C11.67 13.008 9.981 14 8 14c-1.981 0-3.671-.992-4.933-2.078C1.797 10.83.88 9.576.43 8.898a1.62 1.62 0 0 1 0-1.798c.45-.677 1.367-1.931 2.637-3.022C4.33 2.992 6.019 2 8 2ZM1.679 7.932a.12.12 0 0 0 0 .136c.411.622 1.241 1.75 2.366 2.717C5.176 11.758 6.527 12.5 8 12.5c1.473 0 2.825-.742 3.955-1.715 1.124-.967 1.954-2.096 2.366-2.717a.12.12 0 0 0 0-.136c-.412-.621-1.242-1.75-2.366-2.717C10.824 4.242 9.473 3.5 8 3.5c-1.473 0-2.825.742-3.955 1.715-1.124.967-1.954 2.096-2.366 2.717ZM8 10a2 2 0 1 1-.001-3.999A2 2 0 0 1 8 10Z"/></svg><span style="letter-spacing:-.25px"><b class="fw-semibold">1</b> watching</span></div>
      <div class="meta d-flex align-items-center"><svg class="oct" viewBox="0 0 16 16"><path d="M5 5.372v.878c0 .414.336.75.75.75h4.5a.75.75 0 0 0 .75-.75v-.878a2.25 2.25 0 1 1 1.5 0v.878a2.25 2.25 0 0 1-2.25 2.25h-1.5v2.128a2.251 2.251 0 1 1-1.5 0V8.5h-1.5A2.25 2.25 0 0 1 3.5 6.25v-.878a2.25 2.25 0 1 1 1.5 0ZM5 3.25a.75.75 0 1 0-1.5 0 .75.75 0 0 0 1.5 0Zm6.75.75a.75.75 0 1 0 0-1.5.75.75 0 0 0 0 1.5Zm-3 8.75a.75.75 0 1 0-1.5 0 .75.75 0 0 0 1.5 0Z"/></svg><span><b class="fw-semibold">0</b> forks</span></div>
    </div>
    <div class="blk"><h2>Releases</h2><div class="tiny" style="margin-top:25px">No releases published<br><a href="#">Create a new release</a></div></div>
    <div class="blk"><h2>Packages</h2><div class="tiny" style="margin-top:25px">No packages published<br><a href="#">Publish your first package</a></div></div>
    <div class="blk"></div>
  </aside>
  <div class="scroller"><svg width="12" height="7"><path d="M0 7 6 0l6 7Z" fill="#505050"/></svg><div class="thumb"></div><svg width="12" height="7" class="mt-auto"><path d="m0 0 6 7 6-7Z" fill="#505050"/></svg></div>
</main>
<div class="bubble">github.com/AbhishekAutomationHbz/ProjectForDevops/.../azure-pipelines.y...</div>

<footer class="taskbar d-flex">
  <div class="tk72"><svg width="24" height="24" viewBox="0 0 24 24"><path d="M0 3.400 10 2v9.500H0ZM11 1.800 24 0v11.500H11ZM0 12.500h10V22L0 20.600ZM11 12.500h13V24l-13-1.800Z"/></svg></div>
  <div class="tk72"><svg width="34" height="34" viewBox="0 0 34 34"><circle cx="20" cy="14" r="12" fill="none" stroke="#000" stroke-width="3"/><path d="M11.500 22.500 1.500 32.500" stroke="#000" stroke-width="3.500"/></svg></div>
  <div class="tk72" style="width:76.5px;padding-right:5px"><svg width="24" height="24" viewBox="0 0 24 24"><path d="M.7 0v3.500h15V0M.7 6.500h15v10H.7ZM.7 24v-3.500h15V24M22 0v5M22 12v12" fill="none" stroke="#000" stroke-width="1.300"/><path d="M20.500 7h3v3h-3Z"/></svg></div>
  <div class="tk"><svg width="36" height="36" viewBox="0 0 36 36"><path d="M1 14C2 6 9 0 18 0c10 0 18 7 18 15 0 6-4 9-9 9-4 0-6-1-6-3 0-1 1-2 1-4 0-4-5-8-11-8-5 0-8 2-10 5Z" fill="url(#gEdge)"/><path d="M0 18C0 12 5 9 11 9c6 0 11 3 11 7-3-3-9-3-11 3-2 7 2 14 8 17C9 36.500 0 29 0 18Z" fill="#087bd5"/><path d="M11 19c-1 7 5 12 12 12 4 0 7-1 10-3-3 5-8 8-14 8-5-2-10-9-8-17Z" fill="#1250a0"/></svg></div>
  <div class="tk run"><svg width="32" height="28" viewBox="0 0 32 28"><path d="M0 2a2 2 0 0 1 2-2h10l3 4v6H0Z" fill="#e3a008"/><path d="M0 5h13l2-2h15a2 2 0 0 1 2 2v20H0Z" fill="#ffd563"/><path d="M5 27V16a2 2 0 0 1 2-2h17a2 2 0 0 1 2 2v11h-5v-7H10v7Z" fill="#3b97dd"/></svg></div>
  <div class="tk"><svg width="36" height="36" viewBox="0 0 36 36"><path d="M9.500 8V1.500h17V8" fill="none" stroke="#2cb5f1" stroke-width="2.200"/><path d="M.5 5h35v26a4 4 0 0 1-4 4h-27a4 4 0 0 1-4-4Z" fill="url(#gBlue)"/><path d="M9.500 1.500v6M26.500 1.500v6" stroke="#35c4f8" stroke-width="2"/><path d="M11 13h7v7h-7Z" fill="#f25022"/><path d="M19 13h7v7h-7Z" fill="#7fba00"/><path d="M11 21h7v7h-7Z" fill="#00a4ef"/><path d="M19 21h7v7h-7Z" fill="#ffb900"/></svg></div>
  <div class="tk"><svg width="36" height="34" viewBox="0 0 36 34"><path d="M0 10 18 0l18 10v8H0Z" fill="#0a5da8"/><path d="M3 10h30v10L18 25 3 18Z" fill="#f4f4f4"/><path d="M0 10 18 22 36 10v24H0Z" fill="#1c9be6"/><path d="M36 10v24L18 22Z" fill="#35b9f1"/><path d="M0 34 18 22l18 12Z" fill="#2aa9ea"/></svg></div>
  <div class="tk"><svg width="36" height="36" viewBox="0 0 36 36"><path d="M0 0h36v36H0Z" fill="url(#gAsus)"/><path d="m4 27 8-17h4L8 27ZM12 27l8-17h4l-8 17ZM24 12l3 10h-5Z" fill="#dbe6ff"/><circle cx="24.500" cy="25" r="2" fill="#fff"/></svg></div>
  <div class="tk"><svg width="36" height="36" viewBox="0 0 36 36"><rect width="36" height="36" rx="2" fill="#107c10"/><circle cx="18" cy="18" r="14.500" fill="#fff"/><path d="M8 5q5-1 10 3.500Q23 4 28 5l-1 3q-4-.5-7 3 9 8 9.500 16.500L27 31q-2-8-9-15-7 7-9 15l-2.500-3.500Q7 19 16 11q-3-3.500-7-3Z" fill="#107c10"/></svg></div>
  <div class="tk"><svg width="32" height="34" viewBox="0 0 32 34"><path d="M16 0 3 7Q0 9 0 12v12l8 4V15q0-3 3-5l5-2Z" fill="url(#g365)"/><path d="M16 0 29 7q3 2 3 5v10l-9-3v-4L12 9Z" fill="#42b5ef"/><path d="M16 0 12 9l11 6v4l4 1V6Z" fill="#2d5fc0" opacity=".6"/><path d="M0 24 13 32q3 2 6 0l10-7q3-2 3-6l-8 2-8 5H8Z" fill="#8256b8"/><path d="m16 11 6 3.500v6L16 25l-6-4v-6.500Z" fill="#d4d4d4"/></svg></div>
  <div class="tk run cur"><svg width="36" height="36" viewBox="0 0 36 36"><circle cx="18" cy="18" r="18" fill="#fcc31e"/><path d="M18 18 2.400 9A18 18 0 0 1 33.600 9Z" fill="#df3b2f"/><path d="M2.400 9 10 22l10 5-5 8.800A18 18 0 0 1 2.400 9Z" fill="#269546"/><path d="M18 9h15.600A18 18 0 0 1 15 35.800L25 22Z" fill="#fcc31e"/><circle cx="18" cy="18" r="9" fill="#fff"/><circle cx="18" cy="18" r="7" fill="#2c75e9"/></svg></div>
  <div class="tk"><svg width="36" height="38" viewBox="0 0 36 38"><path d="M3 1h30v28h3v2H0v-2h3Z" fill="#0c72b8"/><path d="M7 5h16v33H7Z" fill="#31bdf2"/><path d="M7 20h16v18H7Z" fill="#1583cf"/><path d="M7 34h16v4H7Z" fill="#0e3f78"/><path d="M12 7h6" stroke="#0b5d9d" stroke-width="1.500"/></svg></div>
  <div class="tk"><svg width="36" height="38" viewBox="0 0 36 34"><path d="M14 1a16.500 16.500 0 0 0 0 32A17 17 0 0 1 14 1Z" fill="#f7941e"/><circle cx="20" cy="17" r="16" fill="#2c2255"/><path d="M4 12.500h32M4 17h32M4 21.500h32" stroke="#fff" stroke-width="1.900"/></svg></div>
  <div class="tk"><svg width="34" height="36" viewBox="0 0 34 36"><path fill-rule="evenodd" d="M17 1a17 17 0 1 1 0 34 17 17 0 0 1 0-34Zm0 4c-5 0-8 6-8 13s3 13 8 13 8-6 8-13-3-13-8-13Z" fill="url(#gOp)"/></svg></div>
  <div class="tk"><svg width="33" height="33" viewBox="0 0 33 33"><circle cx="16.500" cy="16.500" r="16.500" fill="#ff6c37"/><circle cx="24" cy="9" r="3" fill="#fff"/><path d="M8 25 17 13l6-2-3 7Z" fill="#fff"/></svg></div>
  <div class="tk run"><svg width="36" height="34" viewBox="0 0 36 34"><path d="M2 4h20l5 5-2 23-24 2Z" fill="#fafafa" stroke="#888"/><path d="M3 3v4M7 3v4M11 3v4M15 3v4M19 3v4" stroke="#555" stroke-width="1.500"/><path d="M3 22h23l-1 10-23 1Z" fill="#55c21c"/><path d="M4 15h22v7H4Z" fill="#b7e78f"/><path d="M6 23c2-8 8-7 10-4M7 19c3-5 9-8 12-6s-3 6-7 5m-6 6 7 2m4-9 7 1" fill="none" stroke="#274d18" stroke-width="2"/><path d="m31 1 3 2-7 22-3 3 1-5Z" fill="#f0ae24" stroke="#976414" stroke-width=".7"/></svg></div>
  <div class="tk run"><svg width="32" height="32" viewBox="0 0 32 32"><rect width="32" height="32" rx="2" fill="#28a8ea"/><path d="m14 24 9-10 9 9v9H14Z" fill="#6f83da"/><path d="m0 21 9-9 23 20H0Z" fill="#114a91"/><circle cx="21" cy="8" r="3.300" fill="#fff"/></svg></div>
  <div class="tk run"><svg width="36" height="34" viewBox="0 0 36 34"><path d="M17 5c9-1 16 5 15 14-1 8-7 12-13 12-5 0-1-6-5-7s-5 4-8 2C-2 21 2 6 17 5Z" fill="#b4dcf2" stroke="#6ba5c8"/><circle cx="6" cy="18" r="2.700" fill="#dc4437"/><circle cx="11" cy="12" r="2.700" fill="#59ad36"/><circle cx="18" cy="10" r="2.700" fill="#f0a12d"/><path d="m17 33 11-22 3 1-11 22Z" fill="#e4852b"/><path d="M27 12c0-5 3-10 8-11-1 3 0 7-4 12Z" fill="#ab8153"/></svg></div>
  <div class="tk run"><svg width="34" height="34" viewBox="0 0 34 34"><ellipse cx="16" cy="9" rx="14" ry="8" fill="#f6f6f6" stroke="#dc3d3d" stroke-width="1.800" transform="rotate(-15 16 9)"/><path d="M2 14c-3 6 2 11 12 8" fill="none" stroke="#e59a9a"/><path d="m13 4 5 17M7 11l17 8" stroke="#8497a5" stroke-width="2"/><g fill="none" stroke="#1273c4" stroke-width="2.600"><ellipse cx="27" cy="21" rx="5" ry="3.500"/><ellipse cx="19" cy="28" rx="3.500" ry="5"/></g></svg></div>

  <div class="d-flex align-items-center flex-shrink-0" style="width:150px;padding-left:38px;font-size:19px;letter-spacing:-.2px"><svg width="36" height="32" viewBox="0 0 36 32"><circle cx="18" cy="16" r="15.500" fill="url(#gSun)"/><path d="M10 7h24M3 13h26M8 19h26M1 25h23" stroke="#f4d9a0" stroke-width="2.400" stroke-linecap="round"/></svg><span style="margin-left:12px;padding-top:2px">33°C</span></div>
  <div class="tray ms-auto">
    <svg width="18" height="10"><path d="m1 9 8-8 8 8" fill="none" stroke="#111" stroke-width="1.500"/></svg>
    <svg width="18" height="24" viewBox="0 0 18 24" fill="none" stroke="#111" stroke-width="1.500"><rect x="2" y="7" width="9" height="11" rx="2"/><path d="m11 11 5-3v9l-5-3M3 3q6-3 12 0M3 21.500q6 3 12 0"/></svg>
    <svg width="25" height="18" viewBox="0 0 25 18"><path d="M6 17a5 5 0 0 1-1-10C7 0 16-1 18 6c7 0 8 11 1 11Z" fill="#888" stroke="#222" stroke-width="1.300"/><path d="m3 14 9-6 11 6q-1 3-4 3H6Z" fill="#eee"/></svg>
    <svg width="16" height="24" viewBox="0 0 16 24"><rect x="3" width="10" height="18" rx="1.500"/><path d="M1 12v5q0 3 3 3h8q3 0 3-3v-5M8 20v3M4 23.300h8" fill="none" stroke="#111" stroke-width="1.300"/></svg>
    <svg width="26" height="24" viewBox="0 0 26 24"><path d="M1 3 23 .7v21L1 20Z" fill="none" stroke="#111" stroke-width="1.300"/><path d="M7 10q4-6 9-2m0-3v3h-3M15 12q-2 5-8 3m0 3v-3h3" fill="none" stroke="#111" stroke-width="1.400"/><circle cx="19" cy="18" r="5.500" fill="#2a6fbd"/></svg>
    <svg width="24" height="18" viewBox="0 0 24 18"><path d="M6 5h17v12H6Z" fill="none" stroke="#111" stroke-width="1.300"/><path d="M8 7h13v8H8Z"/><path d="M1 3h5v3L4.500 8h-2L1 6ZM1.500 0v3M5.500 0v3M3.500 8v6H6" stroke="#111" fill="none" stroke-width="1.300"/></svg>
    <svg width="20" height="20" viewBox="0 0 20 20" fill="none" stroke="#333" stroke-width="1.400"><path d="M1 19Q1 5 18 1M6 19Q6 9 18 6.500M11 19q0-5.500 7-7.500"/><circle cx="16.500" cy="17.500" r="1.700" fill="#111"/></svg>
    <svg width="24" height="20" viewBox="0 0 24 20" fill="none" stroke="#111" stroke-width="1.300"><path d="M1 7h4l5-5v16l-5-5H1ZM13 7q2 3 0 6M16.500 4.500q4 5.500 0 11M20 2q5.500 8 0 16"/></svg>
  </div>
  <span class="align-self-center" style="font-size:17px;letter-spacing:-.5px;margin:0 9px 0 13px;width:34px">ENG</span>
  <div class="clock align-self-center">15:49<br>12-08-2023</div>
  <div class="position-relative" style="width:55px;padding-top:18px;margin-left:15px"><svg width="24" height="24" viewBox="0 0 24 24"><path d="M0 0h24v18H12l-3 6v-6H0Z"/><path d="M5 5h14M5 9.500h14M5 14h9" stroke="#ddd" stroke-width="1.500"/></svg><span class="nbadge">1</span></div>
  <div style="width:7px;border-left:1.5px solid #a8a8a8"></div>
</footer>
</body>
</html>
